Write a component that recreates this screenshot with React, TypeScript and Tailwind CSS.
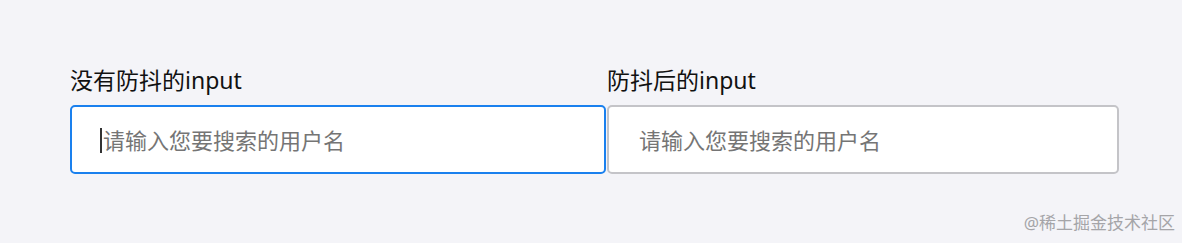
import React from "react";

const fontStack = { fontFamily: '"Noto Sans", "Noto Sans CJK SC", sans-serif' };

const App: React.FC = () => {
  return (
    <div
      className="relative w-[1182px] h-[243px] bg-[#f4f4f8] text-[#111] overflow-hidden"
      style={fontStack}
    >
      <div className="flex pl-[70px] pt-[65px]">
        <div className="w-[537px] flex flex-col">
          <label className="text-[23px] leading-[30px] mb-[10px]">没有防抖的input</label>
          <div className="relative">
            <input
              type="text"
              placeholder="请输入您要搜索的用户名"
              className="w-[536px] h-[69px] bg-white border-2 border-[#1a80ee] rounded-[5px] pl-[31px] text-[22px] outline-none placeholder:text-[#757575]"
            />
            {/* text caret of the focused field */}
            <span className="absolute left-[30px] top-[23px] w-[2px] h-[25px] bg-[#333]" />
          </div>
        </div>
        <div className="w-[512px] flex flex-col">
          <label className="text-[23px] leading-[30px] mb-[10px]">防抖后的input</label>
          <input
            type="text"
            placeholder="请输入您要搜索的用户名"
            className="w-[512px] h-[69px] bg-white border-2 border-[#c4c4c8] rounded-[5px] pl-[30px] text-[22px] outline-none placeholder:text-[#757575]"
          />
        </div>
      </div>
      <div className="absolute right-[7px] bottom-[9px] text-[17px] leading-[22px] text-[#a5a5a8]">
        @稀土掘金技术社区
      </div>
    </div>
  );
};

export default App;
